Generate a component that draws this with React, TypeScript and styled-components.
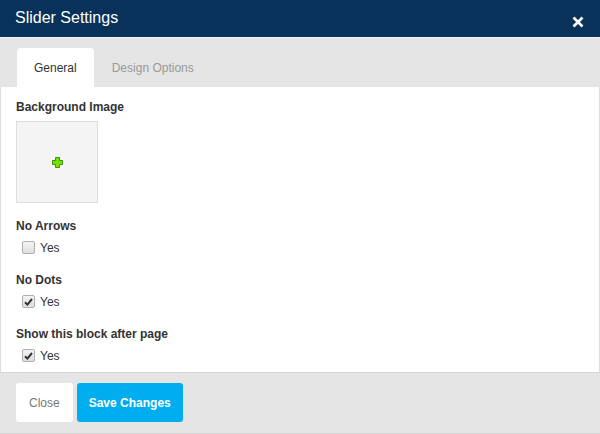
import { FC } from 'react'
import styled, { createGlobalStyle } from 'styled-components'

const GlobalStyle = createGlobalStyle`
  html, body {
    margin: 0;
    padding: 0;
    background: #ffffff;
  }
  body {
    font-family: 'Liberation Sans', Arial, sans-serif;
  }
`

const Modal = styled.div`
  width: 600px;
  height: 434px;
  display: flex;
  flex-direction: column;
  box-sizing: border-box;
  overflow: hidden;
`

const Header = styled.header`
  flex-shrink: 0;
  height: 37px;
  background-color: #08325a;
  display: flex;
  align-items: flex-start;
  justify-content: space-between;
  padding: 0 16px 0 15px;
  border-bottom: 1px solid #f6f6f6;
`

const Title = styled.h1`
  margin: 0;
  padding-top: 8px;
  font-size: 16px;
  line-height: 20px;
  font-weight: normal;
  color: #ffffff;
`

const CloseX = styled.button`
  border: 0;
  background: none;
  padding: 0;
  margin-top: 16px;
  width: 12px;
  height: 12px;
  display: flex;
  cursor: pointer;
`

const TabBar = styled.nav`
  flex-shrink: 0;
  height: 49px;
  background-color: #e5e5e5;
  display: flex;
  align-items: flex-end;
  padding-left: 17px;
  box-sizing: border-box;
`

const Tab = styled.div<{ $active?: boolean }>`
  height: 39px;
  padding: 0 17px;
  margin-right: 1px;
  display: flex;
  align-items: center;
  font-size: 12px;
  color: ${(p) => (p.$active ? '#333333' : '#999999')};
  background-color: ${(p) => (p.$active ? '#ffffff' : 'transparent')};
  border-radius: 4px 4px 0 0;
`

const Content = styled.main`
  flex: 1;
  min-height: 0;
  overflow: hidden;
  background: #ffffff;
  border-left: 1px solid #dddddd;
  border-right: 1px solid #dddddd;
  padding: 11px 0 0 15px;
`

const Field = styled.div`
  margin-bottom: 14px;
`

const Label = styled.div`
  font-size: 12px;
  font-weight: bold;
  line-height: 18px;
  color: #333333;
  margin-bottom: 3px;
`

const ImageBox = styled.div`
  width: 80px;
  height: 80px;
  margin-top: 5px;
  background-color: #f4f4f4;
  border: 1px solid #dddddd;
  display: flex;
  align-items: center;
  justify-content: center;
`

const CheckRow = styled.label`
  height: 19px;
  display: flex;
  align-items: center;
  padding-left: 6px;
  gap: 5px;
  font-size: 12px;
  color: #333333;
`

const Box = styled.span`
  width: 11px;
  height: 11px;
  border: 1px solid #b0b0b0;
  border-radius: 2px;
  background: linear-gradient(#f4f4f4, #dedede);
  display: flex;
  align-items: center;
  justify-content: center;
`

const Footer = styled.footer`
  flex-shrink: 0;
  height: 62px;
  background-color: #e5e5e5;
  border-top: 1px solid #d6d6d6;
  border-bottom: 1px solid #d6d6d6;
  display: flex;
  align-items: flex-start;
  gap: 4px;
  padding: 10px 0 0 16px;
  box-sizing: border-box;
`

const Button = styled.button<{ $primary?: boolean }>`
  height: 39px;
  border: 0;
  border-radius: 3px;
  padding: 0 ${(p) => (p.$primary ? '12px' : '13px')};
  font-family: 'Liberation Sans', Arial, sans-serif;
  font-size: 12px;
  font-weight: ${(p) => (p.$primary ? 'bold' : 'normal')};
  color: ${(p) => (p.$primary ? '#ffffff' : '#777777')};
  background-color: ${(p) => (p.$primary ? '#00adef' : '#ffffff')};
  cursor: pointer;
`

const Check: FC<{ checked?: boolean }> = ({ checked }) => (
  <CheckRow>
    <Box>
      {checked && (
        <svg width="9" height="8" viewBox="0 0 9 8">
          <path d="M1 4.2 L3.4 6.6 L8 1" fill="none" stroke="#333" strokeWidth="2" />
        </svg>
      )}
    </Box>
    Yes
  </CheckRow>
)

const App: FC = () => {
  return (
    <Modal>
      <GlobalStyle />
      <Header>
        <Title>Slider Settings</Title>
        <CloseX aria-label="close">
          <svg width="12" height="12" viewBox="0 0 12 12">
            <path d="M1.5 1.5 L10.5 10.5 M10.5 1.5 L1.5 10.5" stroke="#fff" strokeWidth="2.6" />
          </svg>
        </CloseX>
      </Header>
      <TabBar>
        <Tab $active>General</Tab>
        <Tab>Design Options</Tab>
      </TabBar>
      <Content>
        <Field>
          <Label>Background Image</Label>
          <ImageBox>
            <svg width="11" height="11" viewBox="0 0 11 11">
              <path
                d="M3.5 0.5 H7.5 V3.5 H10.5 V7.5 H7.5 V10.5 H3.5 V7.5 H0.5 V3.5 H3.5 Z"
                fill="#7ddc00"
                stroke="#2f9a00"
                strokeWidth="1"
              />
            </svg>
          </ImageBox>
        </Field>
        <Field>
          <Label>No Arrows</Label>
          <Check />
        </Field>
        <Field>
          <Label>No Dots</Label>
          <Check checked />
        </Field>
        <Field>
          <Label>Show this block after page</Label>
          <Check checked />
        </Field>
      </Content>
      <Footer>
        <Button>Close</Button>
        <Button $primary>Save Changes</Button>
      </Footer>
    </Modal>
  )
}

export default App
